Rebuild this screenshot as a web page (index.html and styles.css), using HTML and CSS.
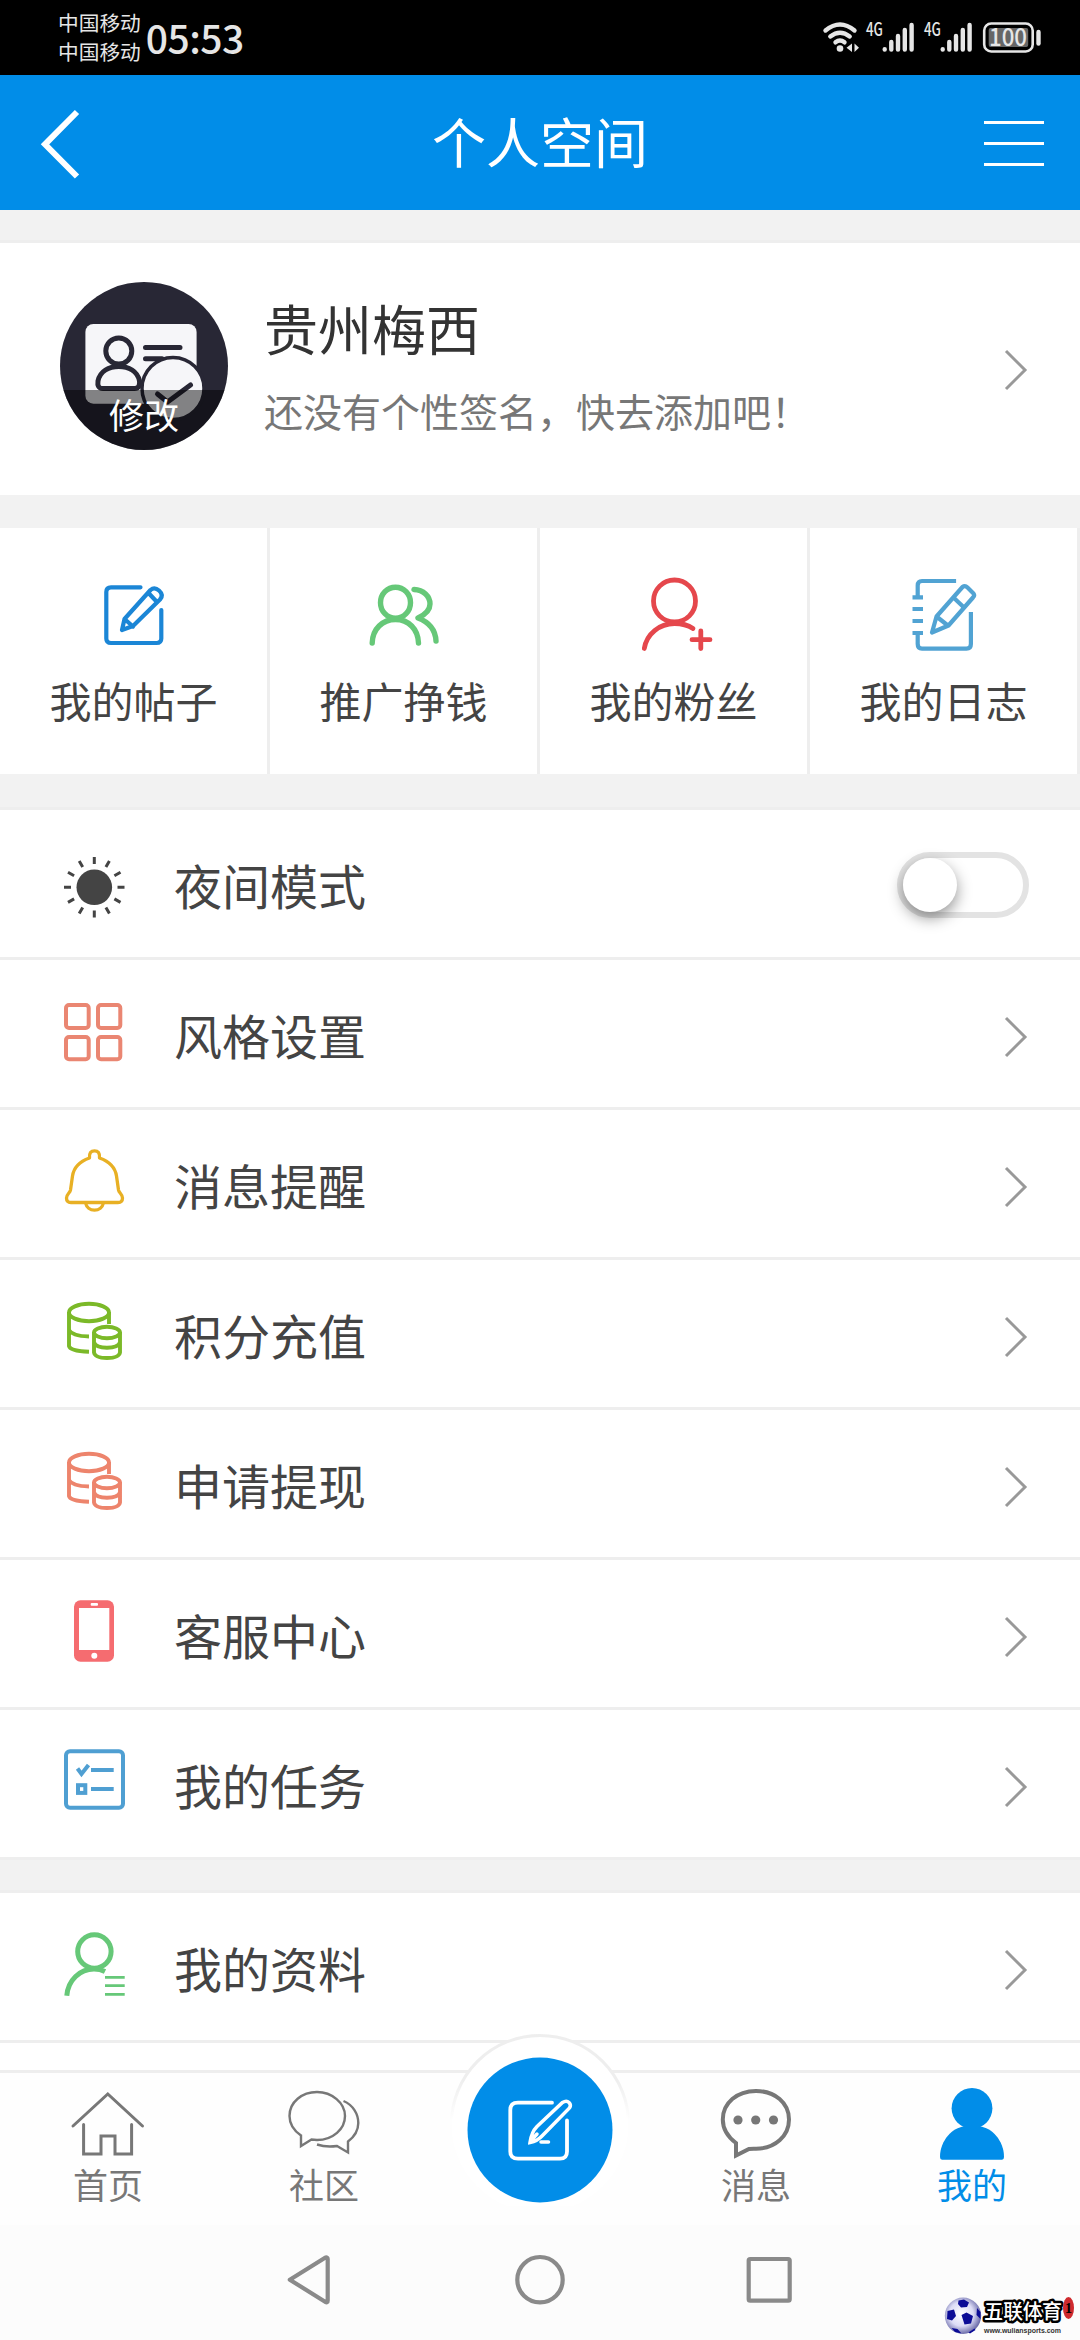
FILE: index.html
```html
<!DOCTYPE html>
<html lang="zh-CN">
<head>
<meta charset="utf-8">
<title>个人空间</title>
<link rel="stylesheet" href="styles.css">
</head>
<body>
<div class="screen">
  <div class="status">
    <div class="carriers"><span>中国移动</span><span>中国移动</span></div>
    <div class="clock">05:53</div>
    <svg class="status-icons" viewBox="820 0 230 75" fill="none" stroke="#e6e6e6" stroke-width="4.4" stroke-linecap="round">
      <path d="M825.5 30.5Q840 18.500 854.500 30.500M830.300 36.500Q840 29 849.700 36.500M835.500 42.300Q840 38.800 844.500 42.300"/>
      <circle cx="840" cy="48.500" r="3.300" fill="#e6e6e6" stroke="none"/>
      <path d="M852 43.500V52L846.500 47.800ZM854.500 43.500V52L859 47.800Z" fill="#e6e6e6" stroke="none"/>
      <g id="signal">
        <text class="net" x="866" y="35.700" textLength="17" lengthAdjust="spacingAndGlyphs">4G</text>
        <path d="M884.700 49.300V49.600M891.300 42V49.600M898 36V49.600M904.800 30V49.600M911.600 25V49.600"/>
      </g>
      <use href="#signal" x="58"/>
      <rect x="984.200" y="23.500" width="48.500" height="28" rx="7" stroke-width="2.600"/>
      <rect x="988.700" y="28" width="39.500" height="19" rx="2" fill="#666" stroke="none"/>
      <text class="level" x="989" y="46" textLength="38" lengthAdjust="spacingAndGlyphs">100</text>
      <path d="M1038.500 32V43.500"/>
    </svg>
  </div>

  <header class="header">
    <svg class="back" viewBox="36 75 60 135" fill="none" stroke="#fff" stroke-width="6"><path d="M77 112L45 144.300L77 176.500"/></svg>
    <h1>个人空间</h1>
    <svg class="menu" viewBox="984 75 60 135" stroke="#fff" stroke-width="3"><path d="M984 122.500H1044M984 143.500H1044M984 164.500H1044"/></svg>
  </header>

  <main class="content">
    <section class="profile">
      <div class="avatar">
        <svg viewBox="60 282 168 168" fill="none" stroke="#282735" stroke-width="5" stroke-linecap="round" stroke-linejoin="round">
          <rect x="85.400" y="324" width="111.200" height="79.700" rx="8" fill="#f6f6f9" stroke="none"/>
          <circle cx="118.800" cy="351" r="13"/>
          <path d="M103 388.500C98 388.500 97.500 385 98 381C100 371 109 366.500 118.800 366.500S137.500 371 139.500 381C140 385 139 388.500 134.500 388.500Z"/>
          <path d="M145.500 347.500H180M145.500 358.700H162"/>
          <circle cx="173" cy="388.500" r="31" fill="#f6f6f9" stroke-width="3.500"/>
          <path d="M157.500 394L167.500 402L190.500 385"/>
        </svg>
        <span>修改</span>
      </div>
      <div class="who">
        <div class="name">贵州梅西</div>
        <div class="sign">还没有个性签名，快去添加吧！</div>
      </div>
      <svg class="chev" viewBox="0 0 24 42"><path d="M2 2L21 21L2 40"/></svg>
    </section>

    <nav class="grid">
      <a class="cell">
        <svg viewBox="88.500 45 90 85" stroke="#1b86d6" stroke-width="4.200">
          <path d="M140 59.300H110.500Q105.800 59.300 105.800 64V110.500Q105.800 115 110.500 115H156Q160.800 115 160.800 110.500V82"/>
          <path d="M121.500 102L124 91L150 62Q154 58.500 158.500 62.500Q163.500 67 159.500 71.500L132.500 98ZM148 65L156 73.500M124 91L132.500 98.500"/>
        </svg>
        <span>我的帖子</span>
      </a>
      <a class="cell">
        <svg viewBox="358.500 45 90 85" stroke="#66c878" stroke-width="5.400">
          <ellipse cx="395" cy="74.700" rx="15" ry="15.500"/>
          <path d="M371.700 115C372 101 382 91.500 395 91.500S417.500 101 418 115M413.500 61.500C423 62 429.500 68 429.500 76C429.500 83 424 87 417.500 90C428 94 435 102 435.500 113"/>
        </svg>
        <span>推广挣钱</span>
      </a>
      <a class="cell">
        <svg viewBox="88.500 45 90 85" stroke="#e5474c" stroke-width="4.800">
          <circle cx="134" cy="73" r="21"/>
          <path d="M103.800 120.500C106 106 119 95.500 134 95.500Q145 95.500 152.500 100.500"/>
          <path d="M151.500 111.700H169.500M160.300 103V120.500"/>
        </svg>
        <span>我的粉丝</span>
      </a>
      <a class="cell">
        <svg class="butt" viewBox="358.500 45 90 85" stroke="#51a3d3" stroke-width="4.200">
          <path d="M415.600 53H381.500Q377.200 53 377.200 57.500V69M372 69.300H382.500M372 81H382.500M372 93H382.500M372 105H382.500M377.200 105V116Q377.200 120.700 381.500 120.700H426Q430.400 120.700 430.400 116V84"/>
          <path d="M391.500 104.500L396 88.500L422 59Q424.500 57 427 59.500L433 65.500Q434.500 67.500 432.500 69.500L408 97.500ZM413.500 70L423.500 79.500M396 88.500L408 98"/>
        </svg>
        <span>我的日志</span>
      </a>
    </nav>

    <section class="list">
      <div class="row">
        <svg class="ico" viewBox="54 0 80 147" stroke="#444" stroke-width="3">
          <circle cx="94.300" cy="77.300" r="17.800" fill="#444" stroke="none"/>
          <path d="M94.300 47V54M94.300 100.500V107.500M64 77.300H71M117.500 77.300H124.500M79.200 51L82.700 57.100M105.900 97.500L109.400 103.600M68 62.200L74.100 65.700M114.400 88.900L120.500 92.400M109.400 51L105.900 57.100M82.700 97.500L79.200 103.600M120.500 62.200L114.400 65.700M74.100 88.900L68 92.400"/>
        </svg>
        <span>夜间模式</span>
        <i class="toggle"></i>
      </div>
      <div class="row">
        <svg class="ico" viewBox="54 0 80 147" stroke="#ea8672" stroke-width="4">
          <rect x="66" y="45" width="22.700" height="23" rx="3"/><rect x="98" y="45" width="22.300" height="23" rx="3"/>
          <rect x="66" y="77" width="22.700" height="22.300" rx="3"/><rect x="98" y="77" width="22.300" height="22.300" rx="3"/>
        </svg>
        <span>风格设置</span>
        <svg class="chev" viewBox="0 0 24 42"><path d="M2 2L21 21L2 40"/></svg>
      </div>
      <div class="row">
        <svg class="ico" viewBox="54 0 80 147" stroke="#e8b024" stroke-width="3.300" stroke-linejoin="round">
          <path d="M89.500 48C89 43 91 40.800 94.500 40.800S100 43 99.500 48C108 51 115 56 116.500 66L118.500 80C119 83 122.500 84 122.500 88Q122.500 92.500 118 92.500H71Q66.500 92.500 66.500 88C66.500 84 70 83 70.500 80L72.500 66C74 56 81 51 89.500 48ZM85.500 93A9.200 9 0 0 0 103.500 93"/>
        </svg>
        <span>消息提醒</span>
        <svg class="chev" viewBox="0 0 24 42"><path d="M2 2L21 21L2 40"/></svg>
      </div>
      <div class="row">
        <svg class="ico" viewBox="54 0 80 147" stroke="#7bb928" stroke-width="3.900">
          <g id="coins">
            <ellipse cx="89" cy="52.500" rx="20" ry="8.700"/>
            <path d="M69 52V86Q70 91 89 91.700M69 70Q72 76 89 76.500M109 52V64"/>
            <ellipse cx="107" cy="72.500" rx="13" ry="5.700"/>
            <path d="M94 72V92.500Q95 98 107 98T120 92.500V72M94 82.500Q96 87.700 107 87.700T120 82.500"/>
          </g>
        </svg>
        <span>积分充值</span>
        <svg class="chev" viewBox="0 0 24 42"><path d="M2 2L21 21L2 40"/></svg>
      </div>
      <div class="row">
        <svg class="ico" viewBox="54 0 80 147" stroke="#ed846c" stroke-width="3.900"><use href="#coins"/></svg>
        <span>申请提现</span>
        <svg class="chev" viewBox="0 0 24 42"><path d="M2 2L21 21L2 40"/></svg>
      </div>
      <div class="row">
        <svg class="ico" viewBox="54 0 80 147">
          <rect x="74" y="40.300" width="40" height="61.400" rx="6.500" fill="#f56c70"/>
          <rect x="79" y="48" width="30.300" height="42" fill="#fff"/>
          <rect x="90.700" y="43" width="7.300" height="2.700" rx="1" fill="#fff"/>
          <circle cx="94.300" cy="95.700" r="3" fill="#fff"/>
        </svg>
        <span>客服中心</span>
        <svg class="chev" viewBox="0 0 24 42"><path d="M2 2L21 21L2 40"/></svg>
      </div>
      <div class="row">
        <svg class="ico" viewBox="54 0 80 147" stroke="#4f9fd2" stroke-width="4">
          <rect x="66" y="41.300" width="57" height="56.400" rx="4"/>
          <path d="M77.500 58.500L81.500 64L88.500 55M91 60H113.700M91 79H113.700"/>
          <rect x="78" y="75.200" width="7.300" height="7.700"/>
        </svg>
        <span>我的任务</span>
        <svg class="chev" viewBox="0 0 24 42"><path d="M2 2L21 21L2 40"/></svg>
      </div>
    </section>

    <section class="list second">
      <div class="row">
        <svg class="ico" viewBox="54 0 80 147" stroke="#66c878" stroke-width="5">
          <circle cx="94.400" cy="58.500" r="16.700"/>
          <path d="M66.800 102.700C68 87 80 76 94 76Q100 76 105 78.500"/>
          <path d="M105 84.300H124.700M105 92.700H124.700M105 101.300H124.700" stroke-width="2.700"/>
        </svg>
        <span>我的资料</span>
        <svg class="chev" viewBox="0 0 24 42"><path d="M2 2L21 21L2 40"/></svg>
      </div>
    </section>
  </main>

  <nav class="tabs">
    <a class="tab">
      <svg viewBox="67 14 82 80" stroke-width="3" stroke-linecap="round"><path d="M73 56L107.800 24L142.500 56M83.600 54.500V84H101V66H115V84H131.600V54.500"/></svg>
      <span>首页</span>
    </a>
    <a class="tab">
      <svg viewBox="283 14 82 80" stroke-width="2.400">
        <path d="M301 76V65.500C293 60 289.500 53 289.500 46C289.500 32 302 22 317 22S345 33 345 46S333 70 317 70L311.500 69.500Z"/>
        <path d="M343.500 31C353 35 358.300 44 358.300 53C358.300 60 354 67 348 71.500V82.500L337 76Q326 77.500 317 74.500"/>
      </svg>
      <span>社区</span>
    </a>
    <a class="tab publish">
      <svg class="fab" viewBox="444 2030 192 176">
        <defs><linearGradient id="fade" x1="0" y1="2080" x2="0" y2="2120" gradientUnits="userSpaceOnUse"><stop offset="0" stop-color="#eee"/><stop offset="1" stop-color="#eee" stop-opacity="0"/></linearGradient></defs>
        <circle cx="540" cy="2124" r="88.500" fill="#fff" stroke="url(#fade)" stroke-width="3"/>
        <circle cx="540" cy="2130" r="72.500" fill="#018de8"/>
        <path d="M552 2102.700H518Q510.300 2102.700 510.300 2110V2151.500Q510.300 2158.700 518 2158.700H560Q567 2158.700 567 2151.500V2120.500" stroke="#fff" stroke-width="3.800" stroke-linecap="round"/>
        <path d="M530 2142.500Q531.500 2132 537 2126.500L562.500 2102.500Q566.500 2100 569 2102.500Q571.500 2105 569.500 2108L542.500 2135.500Q537.500 2141 530 2142.500ZM532 2139.500L537 2134M541 2142H548.500" stroke="#fff" stroke-width="3.500" stroke-linecap="round"/>
      </svg>
    </a>
    <a class="tab">
      <svg viewBox="715 14 82 80" stroke-width="4">
        <path d="M736 85.500V73C728 67 722.800 58.500 722.800 49.500C722.800 33 737 21 756 21S789 33 789 49.500S775 78.700 756 78.700Q752 78.500 749 79Z"/>
        <g fill="#777" stroke="none"><circle cx="738" cy="50" r="4.600"/><circle cx="755.700" cy="50" r="4.600"/><circle cx="773.500" cy="50" r="4.600"/></g>
      </svg>
      <span>消息</span>
    </a>
    <a class="tab active">
      <svg viewBox="931 14 82 80"><g fill="#018de8" stroke="none"><circle cx="972" cy="38.300" r="20.400"/><path d="M942 89.700Q940 89.700 940 87C940 70 953 57.500 964 56.500H980C991 57.500 1004 70 1004 87Q1004 89.700 1002 89.700Z"/><path d="M962 50H982L980 57H964Z"/></g></svg>
      <span>我的</span>
    </a>
  </nav>

  <footer class="sysnav">
    <svg viewBox="280 2250 520 60" fill="none" stroke="#8a8a8a" stroke-width="4.200" stroke-linejoin="round">
      <path d="M289.800 2279.700L325.500 2257.500Q327.700 2257 327.700 2259V2300.500Q327.700 2303 325.500 2302Z"/>
      <circle cx="540" cy="2279.700" r="22.700"/>
      <rect x="748.700" y="2259" width="41" height="41.700" rx="1.500"/>
    </svg>
    <svg class="mark" viewBox="930 2290 150 50">
      <defs><radialGradient id="ball" cx=".45" cy=".45" r=".55"><stop offset="0" stop-color="#fff"/><stop offset=".6" stop-color="#dcdcf6"/><stop offset="1" stop-color="#6d6daa"/></radialGradient></defs>
      <circle cx="963" cy="2315.800" r="18.200" fill="url(#ball)"/>
      <path d="M958.500 2300.500L964 2299.500L969 2302.500L967 2307L961 2307.500L958 2304ZM947.500 2311L954 2309.500L956 2316L952 2320.500L947 2319ZM961.500 2315L966.500 2312.500L973 2316L971 2323.500L964.500 2324.500ZM977 2308L980.500 2312L980.500 2319L976.500 2315ZM951.500 2328L957.500 2329L961.500 2333.500L955 2332ZM968.500 2332.500L974.500 2328.500L975.500 2330L970 2333.500Z" fill="#0b0b96"/>
      <text class="brand" x="984" y="2318.500" textLength="78">五联体育</text>
      <text class="url" x="984" y="2333.300" textLength="77" lengthAdjust="spacingAndGlyphs">www.wuliansports.com</text>
      <ellipse cx="1068.500" cy="2308" rx="5.500" ry="11" fill="#cf2a2e"/>
      <text class="seal" x="1068.500" y="2313" text-anchor="middle">1</text>
    </svg>
  </footer>
</div>
</body>
</html>
```
FILE: styles.css
```css
* { box-sizing: border-box; }

body {
  margin: 0;
  font-family: "Noto Sans CJK SC", sans-serif;
  color: #444;
}

h1 { margin: 0; font-weight: 400; }
svg { display: block; flex: none; }

.screen {
  width: 1080px;
  height: 2340px;
  display: flex;
  flex-direction: column;
  overflow: hidden;
  background: #f2f2f2;
}

/* Status bar */
.status {
  height: 75px;
  flex: none;
  display: flex;
  align-items: center;
  padding: 0 30px 0 58px;
  background: #000;
  color: #e6e6e6;
}
.carriers {
  display: flex;
  flex-direction: column;
  font-size: 20.7px;
  line-height: 29px;
  padding-bottom: 1px;
}
.clock {
  margin-left: 5px;
  font-size: 39px;
  font-weight: 500;
  letter-spacing: -.5px;
  line-height: 75px;
}
.status-icons { width: 230px; height: 75px; margin-left: auto; }
.status-icons text { fill: #e6e6e6; stroke: none; font-weight: 500; }
.status-icons .net { font-size: 18px; }
.status-icons .level { font-size: 24px; }

/* Title bar */
.header {
  height: 135px;
  flex: none;
  display: flex;
  align-items: center;
  justify-content: space-between;
  padding: 0 36px;
  background: #018de8;
  color: #fff;
}
.header h1 { font-size: 54px; line-height: 132px; padding-bottom: 3px; }
.back, .menu { width: 60px; height: 135px; }

.content { flex: 1; min-height: 0; overflow: hidden; }

/* Profile */
.profile {
  height: 255px;
  margin-top: 30px;
  padding: 0 52px 0 60px;
  border-top: 3px solid #eee;
  display: flex;
  align-items: center;
  background: #fff;
}
.avatar {
  width: 168px;
  height: 168px;
  flex: none;
  margin-top: -6px;
  border-radius: 50%;
  overflow: hidden;
  background: #282735;
}
.avatar svg { width: 168px; height: 168px; }
.avatar span {
  display: block;
  height: 60px;
  margin-top: -60px;
  position: relative;
  background: rgba(0, 0, 0, .47);
  color: #fff;
  font-size: 35px;
  line-height: 48px;
  text-align: center;
}
.who { margin-left: 36px; margin-top: -10px; flex: 1; }
.name { font-size: 54px; line-height: 78px; color: #333; }
.sign { font-size: 39px; line-height: 58px; margin-top: 14px; color: #777; white-space: nowrap; }

.chev {
  width: 24px;
  height: 42px;
  margin-left: auto;
  fill: none;
  stroke: #999;
  stroke-width: 3;
}
.profile .chev { margin-top: 2px; }

/* Shortcuts */
.grid {
  display: grid;
  grid-template-columns: repeat(4, 1fr);
  height: 246px;
  margin-top: 33px;
}
.cell {
  display: flex;
  flex-direction: column;
  align-items: center;
  padding-top: 45px;
  border-right: 3px solid #eee;
  background: #fff;
  font-size: 42px;
  line-height: 60px;
}
.cell svg {
  width: 90px;
  height: 85px;
  margin-bottom: 12px;
  fill: none;
  stroke-linecap: round;
  stroke-linejoin: round;
}
.cell .butt { stroke-linecap: butt; }

/* Menu list */
.list { margin-top: 33px; border-top: 3px solid #eee; }
.row {
  height: 150px;
  display: flex;
  align-items: center;
  padding: 0 52px 0 54px;
  border-bottom: 3px solid #eee;
  background: #fff;
  font-size: 48px;
}
.row .ico { width: 80px; height: 147px; fill: none; }
.row span { margin-left: 40px; line-height: 72px; }
.row .chev { margin-top: 6px; }
.toggle {
  width: 132px;
  height: 66px;
  margin: 3px -1px 0 auto;
  border: 6px solid #e3e3e3;
  border-radius: 33px;
}
.toggle::before {
  content: "";
  display: block;
  width: 54px;
  height: 54px;
  border-radius: 50%;
  background: #fff;
  box-shadow: 0 6px 15px rgba(0, 0, 0, .42);
}
.second { margin-top: 30px; }
.second .row { box-shadow: 0 150px 0 #fff; }

/* Bottom tabs */
.tabs {
  height: 155px;
  flex: none;
  display: grid;
  grid-template-columns: repeat(5, 1fr);
  border-top: 3px solid #eee;
  background: #fefefe;
}
.tab {
  position: relative;
  display: flex;
  flex-direction: column;
  align-items: center;
  padding-top: 11px;
  color: #777;
  font-size: 35px;
  line-height: 48px;
}
.tab svg { width: 82px; height: 80px; fill: none; stroke: #777; }
.tab span { margin-top: -4px; }
.tab.active { color: #018de8; }
.tab .fab {
  position: absolute;
  left: 12px;
  top: -43px;
  width: 192px;
  height: 176px;
  stroke: none;
}

/* System navigation */
.sysnav {
  height: 115px;
  flex: none;
  display: flex;
  align-items: flex-start;
  justify-content: flex-end;
  background: #fcfcfc;
}
.sysnav svg { width: 520px; height: 60px; margin-top: 25px; }
.sysnav .mark { width: 150px; height: 50px; margin: 65px 0 0 130px; }
.brand {
  font-size: 20px;
  font-weight: 500;
  fill: #fff;
  stroke: #000;
  stroke-width: 5px;
  stroke-linejoin: round;
  paint-order: stroke;
}
.url { font-family: "Liberation Sans", sans-serif; font-size: 8px; font-weight: 700; fill: #333; }
.seal { font-family: "Liberation Serif", serif; font-size: 14px; font-weight: 700; fill: #000; }
```
